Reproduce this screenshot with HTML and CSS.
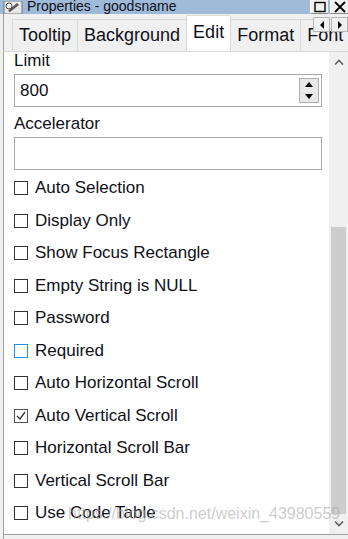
FILE: index.html
```html
<!DOCTYPE html>
<html lang="en">
<head>
    <meta charset="UTF-8">
    <meta name="viewport" content="width=device-width, initial-scale=1.0">
    <title>Properties - goodsname</title>
    <link rel="stylesheet" href="styles.css">
</head>
<body>
    <div class="window">
        <div class="titlebar">
            <svg class="title-icon" width="20" height="13" viewBox="0 0 20 13">
                <rect x="1" y="0" width="18" height="13" fill="#e8e8e8" stroke="#777"/>
                <path d="M5 10 L14 2 L16 4 L7 11 Z" fill="#555"/>
                <circle cx="6" cy="5" r="3" fill="#fff" stroke="#444"/>
            </svg>
            <span class="title-text">Properties -  goodsname</span>
            <div class="title-buttons">
                <span class="tbtn"><svg width="14" height="12" viewBox="0 0 14 12"><rect x="2" y="1.5" width="10" height="9" fill="none" stroke="#000" stroke-width="1.4"/></svg></span>
                <span class="tbtn"><svg width="14" height="12" viewBox="0 0 14 12"><path d="M2 1 L12 11 M12 1 L2 11" stroke="#000" stroke-width="1.8"/></svg></span>
            </div>
        </div>

        <div class="tabs">
            <div class="tab">Tooltip</div>
            <div class="tab">Background</div>
            <div class="tab active">Edit</div>
            <div class="tab">Format</div>
            <div class="tab">Font</div>
            <div class="tab-scroll">
                <span class="tscroll"><svg width="6" height="8" viewBox="0 0 6 8"><path d="M5 0 L1 4 L5 8 Z" fill="#000"/></svg></span>
                <span class="tscroll"><svg width="6" height="8" viewBox="0 0 6 8"><path d="M1 0 L5 4 L1 8 Z" fill="#000"/></svg></span>
            </div>
        </div>

        <div class="panel">
            <div class="content">
                <div class="label">Limit</div>
                <div class="field">
                    <span class="field-value">800</span>
                    <span class="spinner">
                        <span class="spin"><svg width="8" height="5" viewBox="0 0 8 5"><path d="M0 5 L4 0 L8 5 Z" fill="#000"/></svg></span>
                        <span class="spin"><svg width="8" height="5" viewBox="0 0 8 5"><path d="M0 0 L4 5 L8 0 Z" fill="#000"/></svg></span>
                    </span>
                </div>
                <div class="label next">Accelerator</div>
                <div class="field"></div>

                <ul class="checks">
                    <li><span class="box"></span>Auto Selection</li>
                    <li><span class="box"></span>Display Only</li>
                    <li><span class="box"></span>Show Focus Rectangle</li>
                    <li><span class="box"></span>Empty String is NULL</li>
                    <li><span class="box"></span>Password</li>
                    <li><span class="box focus"></span>Required</li>
                    <li><span class="box"></span>Auto Horizontal Scroll</li>
                    <li><span class="box checked"><svg width="12" height="12" viewBox="0 0 12 12"><path d="M2 6 L5 9 L10 2" fill="none" stroke="#333" stroke-width="1.3"/></svg></span>Auto Vertical Scroll</li>
                    <li><span class="box"></span>Horizontal Scroll Bar</li>
                    <li><span class="box"></span>Vertical Scroll Bar</li>
                    <li><span class="box"></span>Use Code Table</li>
                </ul>
            </div>
            <div class="scrollbar">
                <span class="sarrow"><svg width="10" height="6" viewBox="0 0 10 6"><path d="M1 5.5 L5 1.5 L9 5.5" fill="none" stroke="#606060" stroke-width="1.6"/></svg></span>
                <div class="track"></div>
                <div class="thumb"></div>
                <span class="sarrow"><svg width="10" height="6" viewBox="0 0 10 6"><path d="M1 0.5 L5 4.5 L9 0.5" fill="none" stroke="#606060" stroke-width="1.6"/></svg></span>
            </div>
            <div class="watermark">https://blog.csdn.net/weixin_43980559</div>
        </div>
        <div class="bottom"></div>
    </div>
</body>
</html>
```

FILE: styles.css
```css
body {
    margin: 0;
    width: 348px;
    height: 539px;
    overflow: hidden;
    background: #f0f0f0;
    font-family: "Liberation Sans", Arial, sans-serif;
    color: #101018;
}
.window {
    display: flex;
    flex-direction: column;
    height: 539px;
}
.titlebar {
    height: 14px;
    background: #9fbad8;
    display: flex;
    align-items: center;
    overflow: hidden;
}
.title-icon {
    margin-left: 3px;
    margin-right: 4px;
}
.title-text {
    font-size: 14px;
    line-height: 16px;
    margin-top: -2px;
}
.title-buttons {
    margin-left: auto;
    display: flex;
    gap: 2px;
    height: 14px;
}
.tbtn {
    width: 18px;
    height: 14px;
    background: #f0f0f0;
    border-left: 1px solid #fff;
    border-bottom: 1px solid #888;
    display: flex;
    align-items: center;
    justify-content: center;
    box-sizing: border-box;
}
.tabs {
    height: 37px;
    display: flex;
    align-items: flex-end;
    padding-left: 8px;
    border-left: 1px solid #a0a0a0;
    margin-left: 3px;
    position: relative;
    border-bottom: 1px solid #d9d9d9;
    overflow: hidden;
}
.tab {
    height: 32px;
    box-sizing: border-box;
    border: 1px solid #d9d9d9;
    border-bottom: none;
    background: #f0f0f0;
    font-size: 18px;
    line-height: 31px;
    padding: 0 6px;
    margin-right: -1px;
    white-space: nowrap;
}
.tab.active {
    height: 37px;
    background: #fff;
    line-height: 32px;
    margin-bottom: -1px;
    position: relative;
    z-index: 1;
}
.tab-scroll {
    position: absolute;
    right: 0;
    top: 3px;
    display: flex;
    gap: 1px;
    z-index: 2;
}
.tscroll {
    width: 17px;
    height: 15px;
    box-sizing: border-box;
    background: #f0f0f0;
    border: 1px solid #b5b5b5;
    display: flex;
    align-items: center;
    justify-content: center;
}
.panel {
    flex: 1;
    display: flex;
    background: #fff;
    margin-left: 3px;
    border-left: 1px solid #a0a0a0;
    position: relative;
    overflow: hidden;
}
.content {
    flex: 1;
    padding: 0 7px 0 10px;
}
.label {
    font-size: 17px;
    line-height: 21px;
    height: 21px;
    margin-top: -2px;
}
.label.next {
    margin-top: 6px;
}
.field {
    height: 33px;
    box-sizing: border-box;
    border: 1px solid #a8a8a8;
    display: flex;
    align-items: center;
    margin-top: 3px;
}
.field-value {
    font-size: 17px;
    padding-left: 5px;
}
.spinner {
    margin-left: auto;
    margin-right: 2px;
    display: flex;
    flex-direction: column;
    gap: 1px;
    border: 1px solid #b0b0b0;
    background: #f0f0f0;
}
.spin {
    width: 18px;
    height: 11px;
    display: flex;
    align-items: center;
    justify-content: center;
    background: #e8e8e8;
}
.checks {
    list-style: none;
    margin: 2px 0 0;
    padding: 0;
}
.checks li {
    height: 32.5px;
    display: flex;
    align-items: center;
    font-size: 17px;
    white-space: nowrap;
}
.box {
    width: 14px;
    height: 14px;
    box-sizing: border-box;
    border: 1px solid #333;
    margin-right: 7px;
    display: flex;
    align-items: center;
    justify-content: center;
}
.box.focus {
    border-color: #1e90e8;
}
.box.checked {
    border-color: #555;
}
.scrollbar {
    width: 19px;
    display: flex;
    flex-direction: column;
    background: #f0f0f0;
}
.sarrow {
    height: 20px;
    display: flex;
    align-items: center;
    justify-content: center;
}
.track {
    height: 155px;
}
.thumb {
    flex: 1;
    background: #cdcdcd;
    margin: 0 2px;
}
.watermark {
    position: absolute;
    left: 64px;
    bottom: 11px;
    font-size: 16px;
    color: rgba(170, 170, 170, 0.6);
    white-space: nowrap;
}
.bottom {
    height: 4px;
    margin-left: 3px;
    border-top: 1px solid #a0a0a0;
    border-left: 1px solid #a0a0a0;
}
```
